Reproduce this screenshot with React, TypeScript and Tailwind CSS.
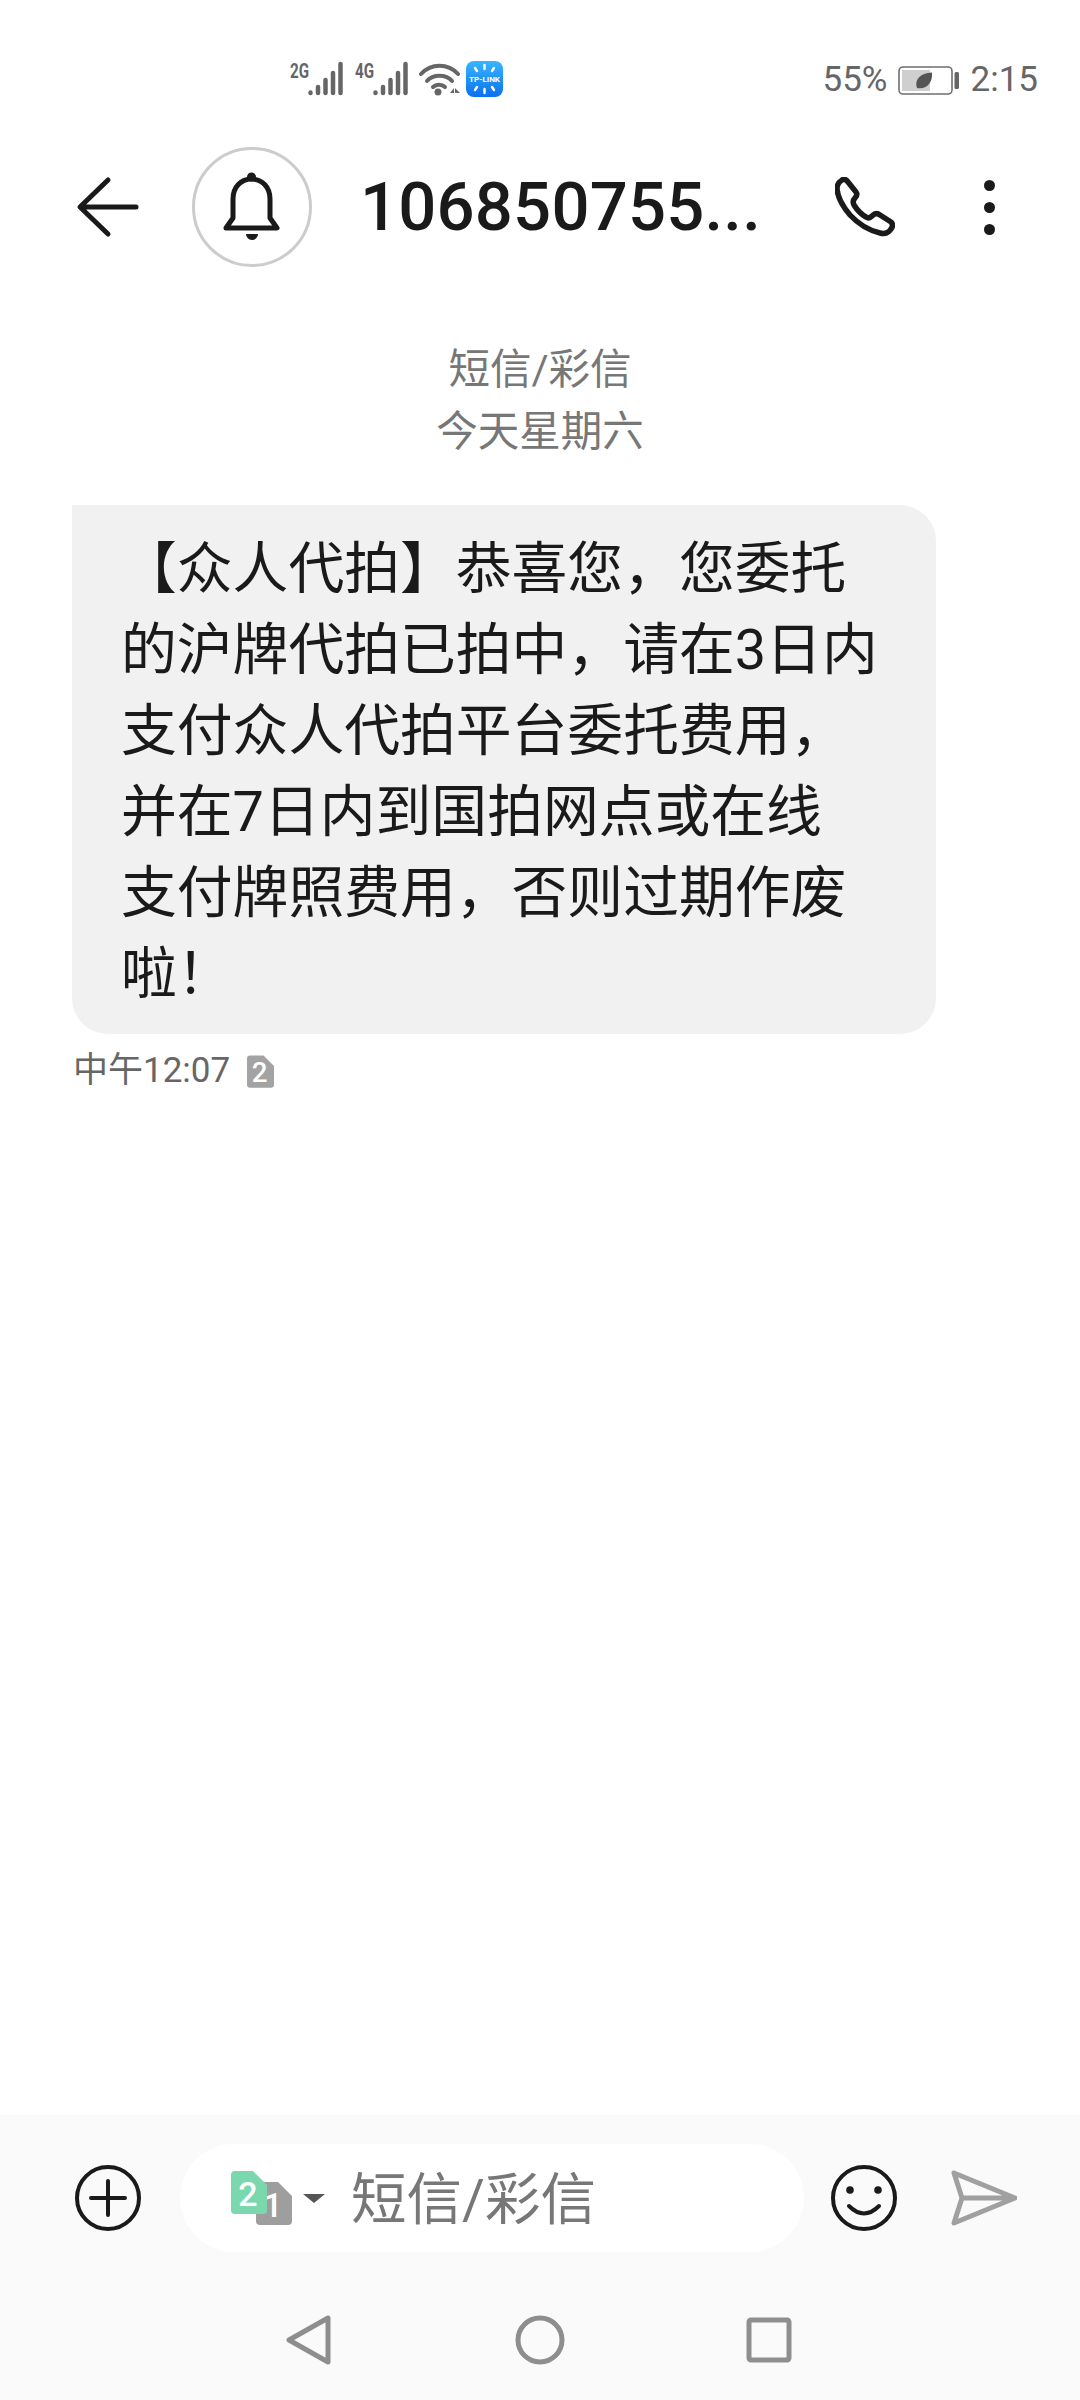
const cjk = { fontFamily: '"Roboto", "Noto Sans CJK SC", sans-serif' };

function Signal({ label }: { label: string }) {
  return (
    <div className="flex h-[36px] w-[54px] items-start">
      <span className="block h-[20px] w-[18px] origin-left scale-x-[0.76] text-[20px] leading-[20px] font-bold text-[#666]">{label}</span>
      <svg width="36" height="36" viewBox="18 0 36 36" className="block">
        <g stroke="#666" strokeWidth="4.5" strokeLinecap="round">
          <path d="M20.5 31.5v.5" />
          <path d="M28 26v6" />
          <path d="M35.5 19v13" />
          <path d="M43 12v20" />
          <path d="M50.5 3v29" />
        </g>
      </svg>
    </div>
  );
}

function Wifi() {
  return (
    <svg width="42" height="34" viewBox="0 0 42 34" className="block">
      <g fill="none" stroke="#666" strokeWidth="4" strokeLinecap="round">
        <path d="M2 12C12 1 29 1 39 12" />
        <path d="M8 19C14 12 27 12 33 19" />
        <path d="M14 25C17 22 23 22 26 25" />
      </g>
      <circle cx="19" cy="30" r="3.5" fill="#666" />
      <path d="M31 31l4-5v5zM36 26l5 5-5 0z" fill="#666" />
    </svg>
  );
}

function TpLink() {
  return (
    <svg width="37" height="36" viewBox="0 0 37 36" className="block">
      <defs>
        <linearGradient id="tp" x1="0" y1="0" x2="0" y2="1">
          <stop offset="0" stopColor="#38b6ff" />
          <stop offset="1" stopColor="#0a70f0" />
        </linearGradient>
      </defs>
      <rect width="37" height="36" rx="8" fill="url(#tp)" />
      <g stroke="#fff" strokeWidth="2.4" strokeLinecap="round">
        <path d="M18.5 4v4" />
        <path d="M18.5 28v4" />
        <path d="M9 7l2 3" />
        <path d="M28 7l-2 3" />
        <path d="M9 29l2-3" />
        <path d="M28 29l-2-3" />
      </g>
      <text x="18.5" y="20.5" textAnchor="middle" fontFamily="Roboto" fontWeight="700" fontSize="7" fill="#fff" textLength="31" lengthAdjust="spacingAndGlyphs">
        TP-LINK
      </text>
    </svg>
  );
}

function Battery() {
  return (
    <svg width="61" height="30" viewBox="0 0 61 30" className="block">
      <rect x="1" y="1" width="53" height="27" rx="4" fill="none" stroke="#6f6f6f" strokeWidth="1.6" />
      <rect x="4" y="4" width="28" height="21" fill="#cfcfcf" />
      <rect x="56.5" y="6" width="4.5" height="17" rx="1.5" fill="#666" />
      <path d="M19 22C16 14 22 7 34 6.5C35 16 29 24 19 22Z" fill="#555" />
    </svg>
  );
}

function SimBadge({ n, bg, size, className }: { n: string; bg: string; size: number; className: string }) {
  return (
    <svg viewBox="0 0 36 43" className={className}>
      <path d="M4 0H22L36 14V39Q36 43 32 43H4Q0 43 0 39V4Q0 0 4 0Z" fill={bg} />
      <text x="17" y="35" textAnchor="middle" fontFamily="Roboto" fontWeight="500" fontSize={size} fill="#fff">
        {n}
      </text>
    </svg>
  );
}

const lines = [
  '【众人代拍】恭喜您，您委托',
  '的沪牌代拍已拍中，请在3日内',
  '支付众人代拍平台委托费用，',
  '并在7日内到国拍网点或在线',
  '支付牌照费用，否则过期作废',
  '啦！',
];

export default function App() {
  return (
    <div className="flex h-[2400px] w-[1080px] flex-col bg-white" style={cjk}>
      {/* status bar */}
      <div className="mt-[61px] flex h-[36px] items-center pr-[42px] pl-[290px] text-[35px] text-[#666]">
        <Signal label="2G" />
        <div className="ml-[11px]">
          <Signal label="4G" />
        </div>
        <div className="ml-[10px]">
          <Wifi />
        </div>
        <div className="ml-[5px]">
          <TpLink />
        </div>
        <div className="ml-auto flex items-center gap-[10px] pt-[3px]">
          <span>55%</span>
          <Battery />
          <span className="ml-[2px]">2:15</span>
        </div>
      </div>

      {/* header */}
      <div className="mt-[51px] flex h-[118px] items-center pl-[76px]">
        <svg width="64" height="64" viewBox="0 0 64 64" className="block">
          <path d="M60 32H5M32 5L4 32l28 27" fill="none" stroke="#1a1a1a" strokeWidth="5" strokeLinecap="round" strokeLinejoin="round" />
        </svg>
        <div className="ml-[52px] flex h-[120px] w-[120px] items-center justify-center rounded-full border-[3px] border-[#cccccc]">
          <svg width="60" height="70" viewBox="0 0 60 70" className="block">
            <path d="M4 56L11 46V27C11 15 19 7 29.5 7C40 7 48 15 48 27V46L55 56Z" fill="none" stroke="#1a1a1a" strokeWidth="5" strokeLinejoin="round" />
            <circle cx="29.5" cy="5" r="4.5" fill="#1a1a1a" />
            <path d="M24 62H36A6 6 0 0 1 24 62Z" fill="#1a1a1a" />
          </svg>
        </div>
        <div className="ml-[48px] w-[400px] text-[67px] leading-[80px] font-medium tracking-[0.2px] text-[#1a1a1a]">106850755...</div>
        <svg width="60" height="60" viewBox="0 0 60 60" className="ml-[75px] block">
          <path
            d="M7 3Q10 1 13 5L21 15Q23 18 20 21Q17 24 19 28Q24 36 31 40Q34 42 37 39Q41 35 45 38L56 45Q59 48 56 52Q52 58 45 56Q28 52 15 38Q3 24 2 12Q2 6 7 3Z"
            fill="none"
            stroke="#1a1a1a"
            strokeWidth="5.5"
            strokeLinejoin="round"
          />
        </svg>
        <div className="ml-[89px] flex flex-col gap-[11px]">
          <div className="h-[11px] w-[11px] rounded-full bg-[#1a1a1a]" />
          <div className="h-[11px] w-[11px] rounded-full bg-[#1a1a1a]" />
          <div className="h-[11px] w-[11px] rounded-full bg-[#1a1a1a]" />
        </div>
      </div>

      {/* messages */}
      <div className="flex-1 pt-[73px]">
        <div className="text-center text-[41.5px] leading-[62px] text-[#777]">
          <div>短信/彩信</div>
          <div>今天星期六</div>
        </div>
        <div className="mt-[42px] ml-[72px] w-[864px] rounded-[36px] rounded-tl-none bg-[#f1f1f1] pt-[24px] pb-[19px] pl-[49px] text-[55.8px] leading-[81px] text-[#1a1a1a]">
          {lines.map((l) => (
            <div key={l} className="whitespace-nowrap">
              {l}
            </div>
          ))}
        </div>
        <div className="mt-[14px] ml-[73px] flex h-[46px] items-center text-[35px] text-[#666]">
          <span>中午12:07</span>
          <SimBadge n="2" bg="#a3a3a3" size={37} className="ml-[17px] block h-[33px] w-[27px]" />
        </div>
      </div>

      {/* input and nav */}
      <div className="bg-[#fafafa] pt-[29px] pb-[35px]">
        <div className="flex items-center pl-[75px]">
          <svg width="66" height="66" viewBox="0 0 66 66" className="block">
            <circle cx="33" cy="33" r="31" fill="none" stroke="#1a1a1a" strokeWidth="4" />
            <path d="M16 33H50M33 16V50" stroke="#1a1a1a" strokeWidth="4" strokeLinecap="round" />
          </svg>
          <div className="ml-[39px] flex h-[108px] w-[624px] items-center rounded-[54px] bg-white pl-[51px]">
            <div className="relative h-[54px] w-[61px]">
              <SimBadge n="1" bg="#9e9e9e" size={34} className="absolute top-[11px] left-[25px] block h-[43px] w-[36px]" />
              <SimBadge n="2" bg="#7bd8ae" size={34} className="absolute top-0 left-0 block h-[43px] w-[36px]" />
            </div>
            <svg width="22" height="9" viewBox="0 0 22 9" className="ml-[11px] block">
              <path d="M0 0H22L11 9Z" fill="#555" />
            </svg>
            <span className="mt-[5px] ml-[26px] text-[55.5px] leading-[70px] text-[#777]">短信/彩信</span>
          </div>
          <svg width="66" height="66" viewBox="0 0 66 66" className="ml-[27px] block">
            <circle cx="33" cy="33" r="31" fill="none" stroke="#1a1a1a" strokeWidth="4" />
            <circle cx="19" cy="25" r="3.8" fill="#1a1a1a" />
            <circle cx="47" cy="25" r="3.8" fill="#1a1a1a" />
            <path d="M18 41Q33 56 48 41" fill="none" stroke="#1a1a1a" strokeWidth="4" strokeLinecap="round" />
          </svg>
          <svg width="66" height="56" viewBox="0 0 66 56" className="ml-[54px] block">
            <path d="M3 3L64 28L3 53L11 28ZM11 28H64" fill="none" stroke="#a0a0a0" strokeWidth="5" strokeLinejoin="round" />
          </svg>
        </div>
        <div className="mt-[63px] flex items-center pl-[284px]">
          <svg width="50" height="50" viewBox="0 0 50 50" className="block">
            <path d="M5 25L44 3V47Z" fill="none" stroke="#8e8e8e" strokeWidth="5" strokeLinejoin="round" />
          </svg>
          <svg width="50" height="50" viewBox="0 0 50 50" className="ml-[181px] block">
            <circle cx="25" cy="25" r="22" fill="none" stroke="#8e8e8e" strokeWidth="5" />
          </svg>
          <svg width="50" height="50" viewBox="0 0 50 50" className="ml-[179px] block">
            <rect x="5" y="5" width="40" height="40" rx="2" fill="none" stroke="#8e8e8e" strokeWidth="5" />
          </svg>
        </div>
      </div>
    </div>
  );
}
